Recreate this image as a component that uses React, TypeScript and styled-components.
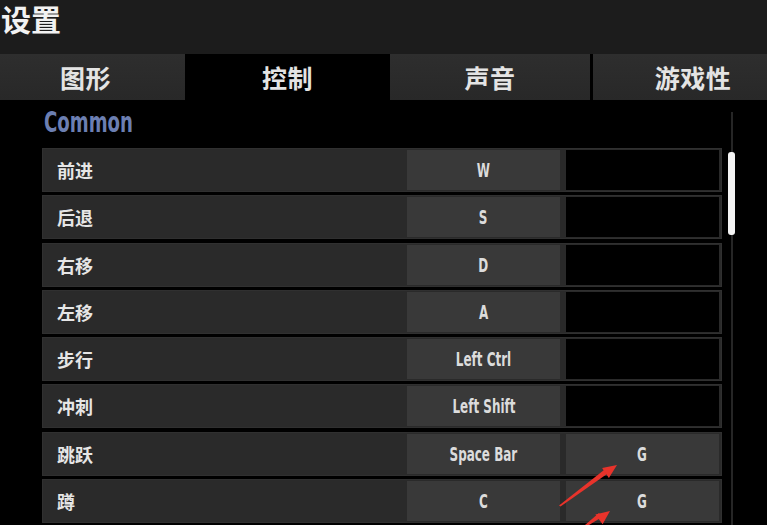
import React from "react";
import styled, { createGlobalStyle } from "styled-components";

const Global = createGlobalStyle`
  html, body { margin: 0; padding: 0; background: #000; overflow: hidden; }
  #root { width: 767px; height: 525px; }
`;

const CJK = `"Noto Sans CJK SC", "Noto Sans", sans-serif`;
const COND = `"Liberation Sans Narrow", "DejaVu Sans Condensed", "Roboto", sans-serif`;

const Page = styled.div`
  position: relative;
  width: 767px;
  height: 525px;
  background: #000;
  overflow: hidden;
  display: flex;
  flex-direction: column;
`;

const Header = styled.div`
  height: 54px;
  background: #1c1c1c;
  display: flex;
  align-items: flex-start;
  padding-left: 1px;
`;

const Title = styled.h1`
  margin: 0;
  font-family: ${CJK};
  font-weight: 700;
  font-size: 30px;
  line-height: 36px;
  color: #f2f2f2;
`;

const TabBar = styled.div`
  height: 46px;
  display: flex;
  background: #000;
`;

const Tab = styled.div<{ $w: number; $active?: boolean; $gap?: number; $shift?: number }>`
  flex: 0 0 ${(p) => p.$w}px;
  margin-right: ${(p) => p.$gap ?? 0}px;
  background: ${(p) => (p.$active ? "#000" : "linear-gradient(#2e2e2e, #282828)")};
  display: flex;
  align-items: center;
  justify-content: center;
  padding-left: ${(p) => Math.max(p.$shift ?? 0, 0)}px;
  padding-right: ${(p) => Math.max(-(p.$shift ?? 0), 0)}px;
  box-sizing: border-box;
  font-family: ${CJK};
  font-weight: 700;
  font-size: 25px;
  color: #e4e4e4;
  letter-spacing: 0.5px;
`;

const Content = styled.div`
  flex: 1;
  display: flex;
  padding-left: 42px;
  min-height: 0;
`;

const Main = styled.div`
  width: 680px;
  display: flex;
  flex-direction: column;
`;

const Section = styled.div`
  height: 48px;
  display: flex;
  align-items: flex-start;
`;

const SectionTitle = styled.h2`
  margin: 8px 0 0 2px;
  font-family: ${COND};
  font-weight: 700;
  font-size: 28px;
  line-height: 30px;
  color: #6c7fb2;
  transform: scaleX(0.72);
  transform-origin: left center;
`;

const List = styled.div`
  display: flex;
  flex-direction: column;
  gap: 3.3px;
`;

const Row = styled.div`
  height: 44px;
  box-sizing: border-box;
  background: #2a2a2a;
  border: 1px solid #303030;
  display: grid;
  grid-template-columns: 1fr 153px 153px;
  column-gap: 6px;
  padding: 1px 2px 1px 14px;
  align-items: stretch;
`;

const Label = styled.div`
  display: flex;
  align-items: center;
  font-family: ${CJK};
  font-weight: 700;
  font-size: 18px;
  color: #e6e6e6;
`;

const Key = styled.div<{ $empty?: boolean }>`
  display: flex;
  align-items: center;
  justify-content: center;
  background: ${(p) => (p.$empty ? "#000" : "#393939")};
  font-family: ${COND};
  font-weight: 700;
  font-size: 19px;
  color: #dcdcdc;
`;

const KeyText = styled.span`
  display: inline-block;
  white-space: nowrap;
  transform: scaleX(0.7);
`;

const ScrollCol = styled.div`
  position: relative;
  width: 7px;
  margin-left: 6px;
  margin-top: 12px;
  display: flex;
  justify-content: center;
`;

const Track = styled.div`
  width: 2px;
  height: 100%;
  background: #262626;
`;

const Thumb = styled.div`
  position: absolute;
  left: 0;
  top: 40px;
  width: 7px;
  height: 83px;
  border-radius: 3px;
  background: #f4f4f4;
`;

const Arrows = styled.svg`
  position: absolute;
  left: 540px;
  top: 455px;
  width: 100px;
  height: 70px;
  pointer-events: none;
`;

const rows: [string, string, string][] = [
  ["前进", "W", ""],
  ["后退", "S", ""],
  ["右移", "D", ""],
  ["左移", "A", ""],
  ["步行", "Left Ctrl", ""],
  ["冲刺", "Left Shift", ""],
  ["跳跃", "Space Bar", "G"],
  ["蹲", "C", "G"],
];

export default function App() {
  return (
    <>
      <Global />
      <Page>
        <Header>
          <Title>设置</Title>
        </Header>
        <TabBar>
          <Tab $w={185} $shift={-14}>图形</Tab>
          <Tab $w={205} $active>控制</Tab>
          <Tab $w={200} $gap={3}>声音</Tab>
          <Tab $w={174} $shift={26}>游戏性</Tab>
        </TabBar>
        <Content>
          <Main>
            <Section>
              <SectionTitle>Common</SectionTitle>
            </Section>
            <List>
              {rows.map(([label, k1, k2]) => (
                <Row key={label}>
                  <Label>{label}</Label>
                  <Key>
                    <KeyText>{k1}</KeyText>
                  </Key>
                  <Key $empty={!k2}>{k2 && <KeyText>{k2}</KeyText>}</Key>
                </Row>
              ))}
            </List>
          </Main>
          <ScrollCol>
            <Track />
            <Thumb />
          </ScrollCol>
        </Content>
        <Arrows viewBox="0 0 100 70">
          <polygon points="19,50.5 20.5,51.5 67,19 64,15" fill="#e8332b" />
          <polygon points="77,10 68.9,22.9 62.1,13.1" fill="#e8332b" />
          <polygon points="45,70 49,70 62,62 59,58" fill="#e8332b" />
          <polygon points="70,56 62.6,69.2 55.4,59.6" fill="#e8332b" />
        </Arrows>
      </Page>
    </>
  );
}
